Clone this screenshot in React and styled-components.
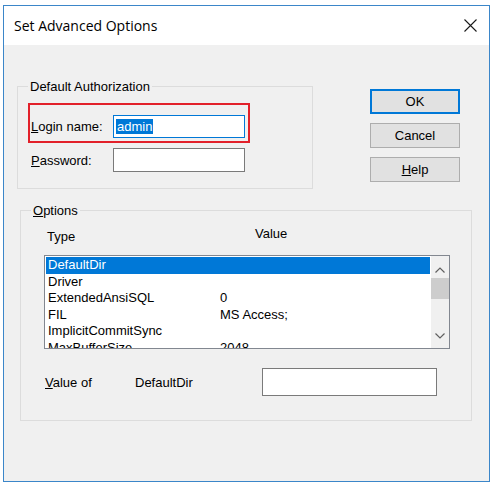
import React from "react";
import styled, { createGlobalStyle } from "styled-components";

const GlobalStyle = createGlobalStyle`
  html, body { margin: 0; padding: 0; background: #ffffff; }
  body {
    font-family: "Liberation Sans", Arial, sans-serif;
    font-size: 13px;
    color: #000;
  }
  * { box-sizing: border-box; }
`;

const Window = styled.div`
  margin: 5px 0 0 3px;
  width: 487px;
  height: 477px;
  border: 1px solid #3b86c9;
  background: #f0f0f0;
  display: flex;
  flex-direction: column;
`;

const TitleBar = styled.div`
  height: 39px;
  flex: none;
  background: #ffffff;
  display: flex;
  align-items: center;
  justify-content: space-between;
  padding: 0 12px 0 10px;
`;

const Title = styled.span`
  font-family: "Open Sans", "Noto Sans", sans-serif;
  font-size: 14px;
  color: #000;
`;

const CloseIcon = styled.svg`
  width: 13px;
  height: 13px;
  display: block;
`;

const Body = styled.div`
  flex: 1;
  padding: 41px 17px 0 13px;
  display: flex;
  flex-direction: column;
`;

const TopRow = styled.div`
  display: flex;
  align-items: flex-start;
`;

const Group = styled.div`
  position: relative;
  border: 1px solid #dcdcdc;
  width: ${(p) => p.$w}px;
  height: ${(p) => p.$h}px;
  margin: ${(p) => p.$margin || "0"};
  padding: ${(p) => p.$pad || "0"};
`;

const Caption = styled.span`
  position: absolute;
  top: -8px;
  left: 10px;
  padding: 0 2px;
  line-height: 15px;
  background: #f0f0f0;
`;

const Highlight = styled.div`
  width: 222px;
  height: 40px;
  border: 2px solid #e2202a;
  display: flex;
  align-items: center;
  padding: 8px 3px 1px 1px;
`;

const FieldRow = styled.div`
  display: flex;
  align-items: center;
  margin: ${(p) => p.$margin || "0"};
  padding-left: ${(p) => p.$indent || 0}px;
`;

const Label = styled.span`
  width: ${(p) => p.$w}px;
  flex: none;
  line-height: 15px;
  white-space: nowrap;
`;

const TextBox = styled.div`
  width: ${(p) => p.$w}px;
  height: ${(p) => p.$h}px;
  flex: none;
  background: #ffffff;
  border: 1px solid ${(p) => (p.$focused ? "#0078d7" : "#7a7a7a")};
  display: flex;
  align-items: center;
  padding-left: 2px;
`;

const Selected = styled.span`
  background: #0078d7;
  color: #ffffff;
  padding: 0 1px;
  line-height: 15px;
`;

const ButtonCol = styled.div`
  display: flex;
  flex-direction: column;
  gap: 9px;
  margin: 3px 0 0 57px;
`;

const Button = styled.div`
  width: 90px;
  height: 25px;
  background: #e1e1e1;
  border: ${(p) => (p.$default ? "2px solid #0078d7" : "1px solid #adadad")};
  display: flex;
  align-items: center;
  justify-content: center;
  line-height: 15px;
`;

const OptionsInner = styled.div`
  display: flex;
  flex-direction: column;
`;

const Header = styled.div`
  display: flex;
  align-items: flex-start;
  height: 18px;
`;

const HeadCell = styled.span`
  width: ${(p) => (p.$w ? `${p.$w}px` : "auto")};
  padding: ${(p) => p.$pad || "0"};
  line-height: 15px;
`;

const ListBox = styled.div`
  margin-top: 11px;
  width: 406px;
  height: 94px;
  border: 1px solid #828790;
  background: #ffffff;
  display: flex;
  gap: 1px;
  padding: 0 0 0 1px;
  overflow: hidden;
`;

const Rows = styled.div`
  flex: 1;
  padding-top: 1px;
  overflow: hidden;
`;

const Row = styled.div`
  display: grid;
  grid-template-columns: 172px 1fr;
  height: 16.5px;
  line-height: 16px;
  padding-left: 2px;
  white-space: nowrap;
  background: ${(p) => (p.$selected ? "#0078d7" : "transparent")};
  color: ${(p) => (p.$selected ? "#ffffff" : "#000000")};
`;

const ScrollBar = styled.div`
  width: 18px;
  flex: none;
  background: #f0f0f0;
  display: flex;
  flex-direction: column;
`;

const ScrollButton = styled.div`
  height: ${(p) => p.$h}px;
  flex: none;
  display: flex;
  justify-content: center;
  align-items: ${(p) => (p.$down ? "flex-start" : "flex-end")};
  padding: ${(p) => (p.$down ? "3px 0 0" : "0 0 4px")};
`;

const Thumb = styled.div`
  height: 21px;
  margin-top: 1px;
  background: #cdcdcd;
`;

const Track = styled.div`
  flex: 1;
`;

const Chevron = styled.svg`
  width: 10px;
  height: 6px;
  display: block;
`;

const ValueRow = styled.div`
  display: flex;
  align-items: center;
  margin-top: 19px;
  padding-left: 1px;
`;

const rows = [
  ["DefaultDir", ""],
  ["Driver", ""],
  ["ExtendedAnsiSQL", "0"],
  ["FIL", "MS Access;"],
  ["ImplicitCommitSync", ""],
  ["MaxBufferSize", "2048"],
  ["PageTimeout", "5"],
];

export default function App() {
  return (
    <>
      <GlobalStyle />
      <Window>
        <TitleBar>
          <Title>Set Advanced Options</Title>
          <CloseIcon viewBox="0 0 13 13">
            <path d="M0.5 0.5 L12.5 12.5 M12.5 0.5 L0.5 12.5" stroke="#1a1a1a" strokeWidth="1.1" fill="none" />
          </CloseIcon>
        </TitleBar>
        <Body>
          <TopRow>
            <Group $w={296} $h={103} $pad="16px 0 0 10px">
              <Caption>Default Authorization</Caption>
              <Highlight>
                <Label $w={82}>
                  <u>L</u>ogin name:
                </Label>
                <TextBox $w={132} $h={23} $focused>
                  <Selected>admin</Selected>
                </TextBox>
              </Highlight>
              <FieldRow $margin="5px 0 0" $indent={3}>
                <Label $w={82}>
                  <u>P</u>assword:
                </Label>
                <TextBox $w={132} $h={24} />
              </FieldRow>
            </Group>
            <ButtonCol>
              <Button $default>OK</Button>
              <Button>Cancel</Button>
              <Button>
                <span>
                  <u>H</u>elp
                </span>
              </Button>
            </ButtonCol>
          </TopRow>
          <Group $w={452} $h={211} $margin="21px 0 0 3px" $pad="15px 0 0 23px">
            <Caption>
              <u>O</u>ptions
            </Caption>
            <OptionsInner>
              <Header>
                <HeadCell $w={211} $pad="3px 0 0 3px">Type</HeadCell>
                <HeadCell>Value</HeadCell>
              </Header>
              <ListBox>
                <Rows>
                  {rows.map(([name, value], i) => (
                    <Row key={name} $selected={i === 0}>
                      <span>{name}</span>
                      <span>{value}</span>
                    </Row>
                  ))}
                </Rows>
                <ScrollBar>
                  <ScrollButton $h={21}>
                    <Chevron viewBox="0 0 10 6">
                      <path d="M0.5 5.5 L5 1 L9.5 5.5" stroke="#606060" strokeWidth="1.2" fill="none" />
                    </Chevron>
                  </ScrollButton>
                  <Thumb />
                  <Track />
                  <ScrollButton $h={18} $down>
                    <Chevron viewBox="0 0 10 6">
                      <path d="M0.5 0.5 L5 5 L9.5 0.5" stroke="#606060" strokeWidth="1.2" fill="none" />
                    </Chevron>
                  </ScrollButton>
                </ScrollBar>
              </ListBox>
              <ValueRow>
                <Label $w={90}>
                  <u>V</u>alue of
                </Label>
                <Label $w={127}>DefaultDir</Label>
                <TextBox $w={175} $h={28} />
              </ValueRow>
            </OptionsInner>
          </Group>
        </Body>
      </Window>
    </>
  );
}
